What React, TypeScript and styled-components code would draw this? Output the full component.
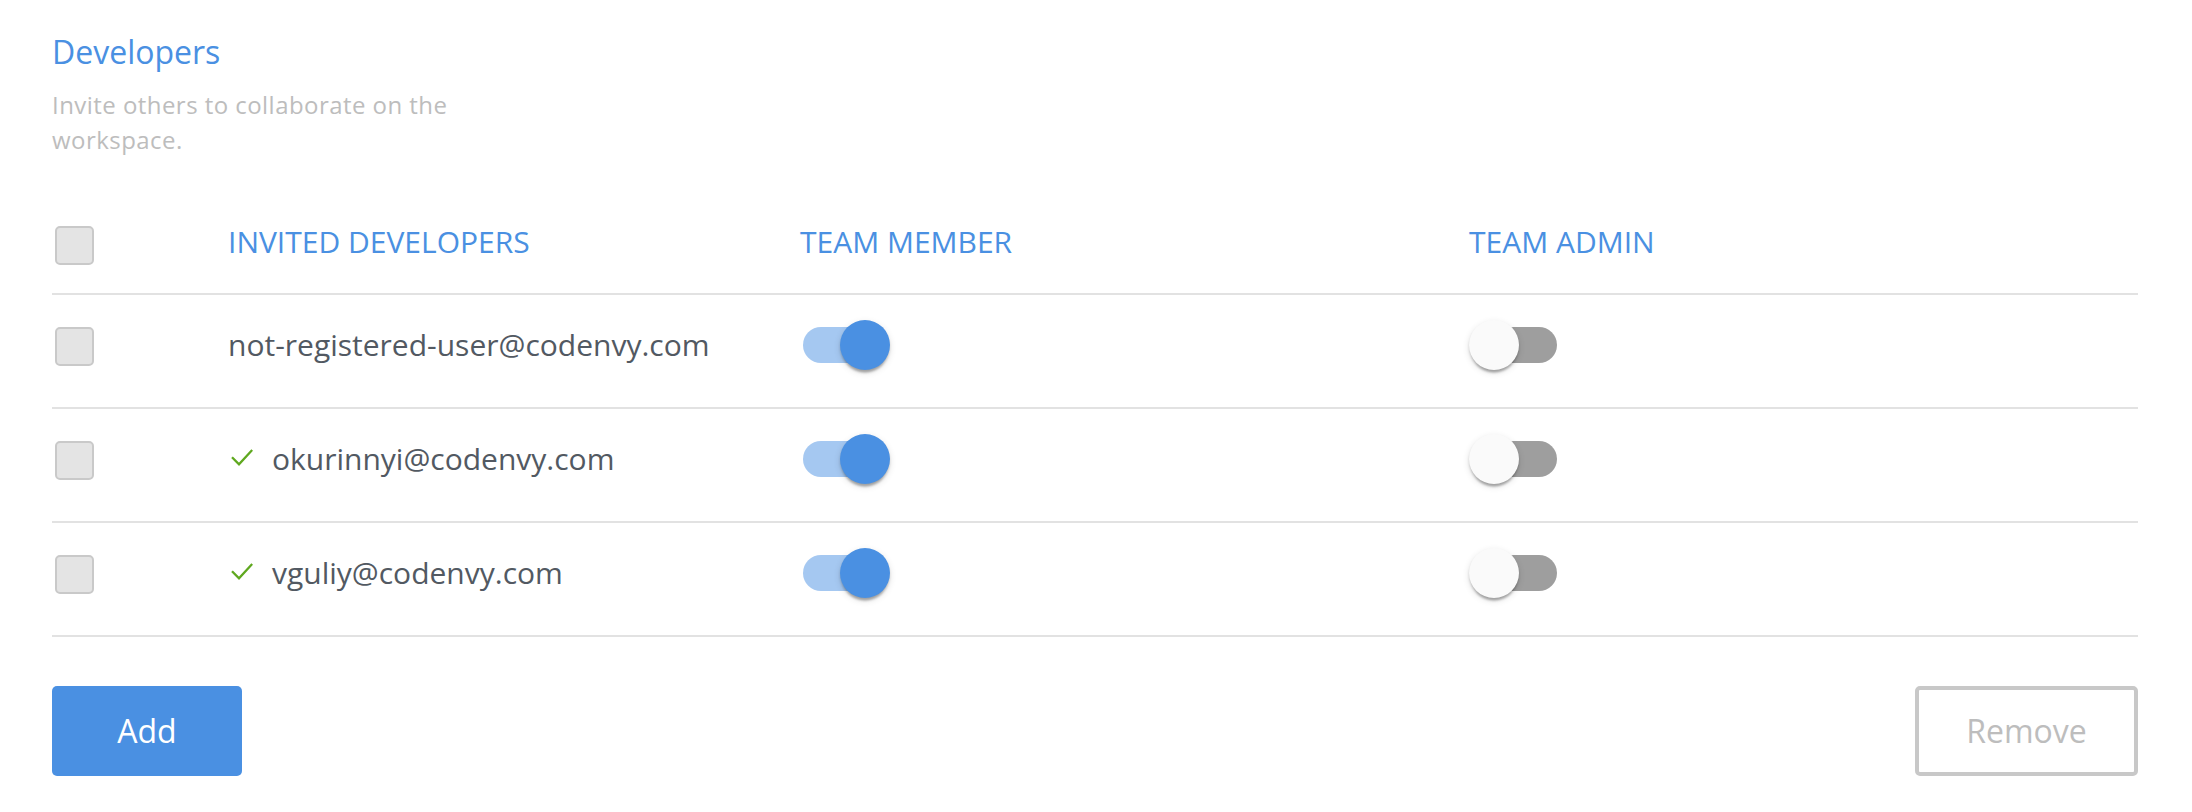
import React from 'react';
import styled, { createGlobalStyle } from 'styled-components';

const GlobalStyle = createGlobalStyle`
  html, body {
    margin: 0;
    padding: 0;
    background: #ffffff;
  }
  body {
    font-family: 'Open Sans', 'Noto Sans', sans-serif;
  }
  * { box-sizing: border-box; }
`;

const Page = styled.div`
  width: 2192px;
  height: 812px;
  padding: 30px 54px 0 52px;
  overflow: hidden;
`;

const Title = styled.h2`
  margin: 0;
  font-size: 32px;
  line-height: 44px;
  font-weight: 400;
  color: #4a90e2;
`;

const Subtitle = styled.p`
  margin: 12.5px 0 0;
  max-width: 460px;
  font-size: 24px;
  line-height: 35px;
  letter-spacing: 0.45px;
  color: #bdbdbd;
`;

const Table = styled.div`
  margin-top: 42px;
`;

const Row = styled.div<{ $header?: boolean }>`
  display: grid;
  grid-template-columns: 176px 572px 1fr 1fr;
  align-items: center;
  height: ${(p) => (p.$header ? 96 : 114)}px;
  padding-bottom: ${(p) => (p.$header ? 0 : 8)}px;
  border-bottom: 2px solid #e2e2e2;
`;

const CheckCell = styled.div`
  display: flex;
  align-items: center;
  padding-left: 2.5px;
`;

const Checkbox = styled.span`
  display: block;
  width: 39px;
  height: 39px;
  border: 2px solid #c9c9c9;
  border-radius: 5px;
  background: #e4e4e4;
`;

const HeadCell = styled.div`
  font-size: 30px;
  line-height: 40px;
  color: #4a90e2;
  text-transform: uppercase;
  padding-bottom: 8px;
  white-space: nowrap;
`;

const EmailCell = styled.div`
  display: flex;
  align-items: center;
`;

const Email = styled.span`
  font-size: 30px;
  line-height: 40px;
  color: #525962;
  padding-bottom: 4px;
  white-space: nowrap;
`;

const CheckIcon = styled.svg`
  display: block;
  width: 22px;
  height: 17px;
  margin: 0 19px 7px 3px;
  flex: none;
`;

const SwitchCell = styled.div`
  display: flex;
  align-items: center;
  padding-bottom: 3px;
`;

const Switch = styled.div`
  position: relative;
  width: 90px;
  height: 50px;
`;

const Track = styled.div<{ $on: boolean }>`
  position: absolute;
  left: 2.5px;
  top: 7px;
  width: 85px;
  height: 36px;
  border-radius: 18px;
  background: ${(p) => (p.$on ? '#a5c8f1' : '#9e9e9e')};
`;

const Thumb = styled.div<{ $on: boolean }>`
  position: absolute;
  top: 0;
  left: ${(p) => (p.$on ? 40 : 0)}px;
  width: 50px;
  height: 50px;
  border-radius: 50%;
  background: ${(p) => (p.$on ? '#4a90e2' : '#fafafa')};
  box-shadow: 0 5px 2.5px -2.5px rgba(0, 0, 0, 0.2),
    0 2.5px 2.5px 0 rgba(0, 0, 0, 0.14),
    0 2.5px 7.5px 0 rgba(0, 0, 0, 0.12);
`;

const Footer = styled.div`
  display: flex;
  justify-content: space-between;
  margin-top: 49.5px;
`;

const Button = styled.button<{ $primary?: boolean }>`
  height: 90px;
  width: ${(p) => (p.$primary ? 190 : 223)}px;
  border-radius: 5px;
  border: ${(p) => (p.$primary ? 'none' : '4px solid #c8c8c8')};
  background: ${(p) => (p.$primary ? '#4a90e2' : '#ffffff')};
  color: ${(p) => (p.$primary ? '#ffffff' : '#bdbdbd')};
  font-family: 'Open Sans', 'Noto Sans', sans-serif;
  font-size: 32px;
  line-height: 40px;
  padding: 0;
  cursor: pointer;
`;

type Dev = { email: string; registered: boolean; member: boolean; admin: boolean };

const devs: Dev[] = [
  { email: 'not-registered-user@codenvy.com', registered: false, member: true, admin: false },
  { email: 'okurinnyi@codenvy.com', registered: true, member: true, admin: false },
  { email: 'vguliy@codenvy.com', registered: true, member: true, admin: false },
];

const Toggle = ({ on }: { on: boolean }) => (
  <Switch>
    <Track $on={on} />
    <Thumb $on={on} />
  </Switch>
);

const Check = () => (
  <CheckIcon viewBox="0 0 22 17">
    <path d="M1 8.2 L8 15.3 L21.2 1" fill="none" stroke="#5fa81f" strokeWidth="2.3" />
  </CheckIcon>
);

export default function App() {
  return (
    <>
      <GlobalStyle />
      <Page>
        <Title>Developers</Title>
        <Subtitle>Invite others to collaborate on the workspace.</Subtitle>
        <Table>
          <Row $header>
            <CheckCell>
              <Checkbox />
            </CheckCell>
            <HeadCell>Invited developers</HeadCell>
            <HeadCell>Team member</HeadCell>
            <HeadCell>Team admin</HeadCell>
          </Row>
          {devs.map((d) => (
            <Row key={d.email}>
              <CheckCell>
                <Checkbox />
              </CheckCell>
              <EmailCell>
                {d.registered && <Check />}
                <Email>{d.email}</Email>
              </EmailCell>
              <SwitchCell>
                <Toggle on={d.member} />
              </SwitchCell>
              <SwitchCell>
                <Toggle on={d.admin} />
              </SwitchCell>
            </Row>
          ))}
        </Table>
        <Footer>
          <Button $primary>Add</Button>
          <Button>Remove</Button>
        </Footer>
      </Page>
    </>
  );
}
